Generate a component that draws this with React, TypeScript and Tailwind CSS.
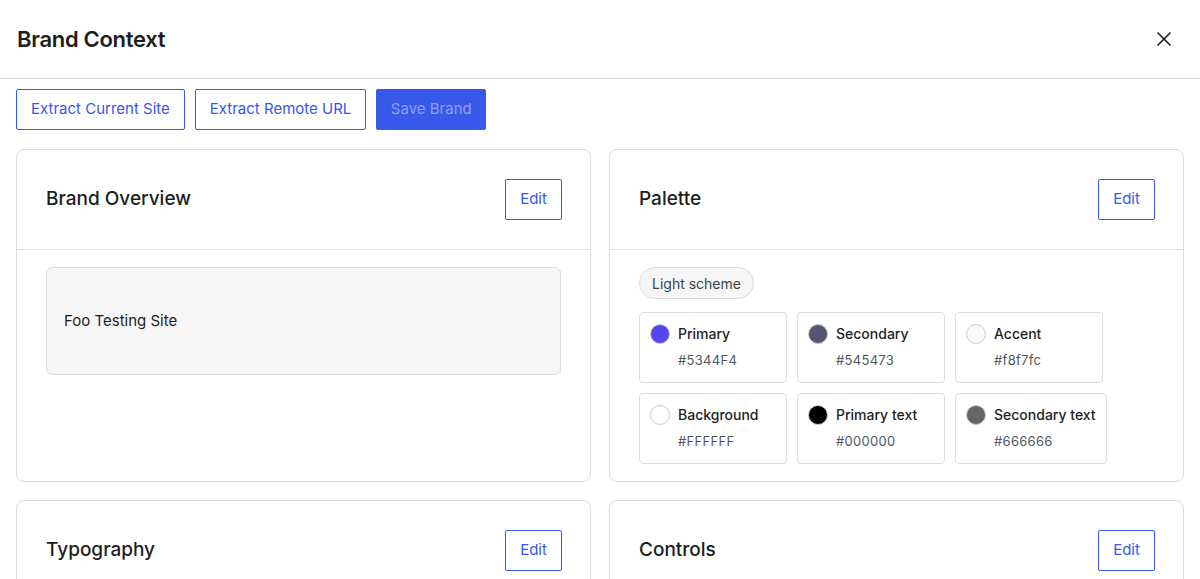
import { X } from 'lucide-react';

const COLORS = [
  { name: 'Primary', hex: '#5344F4' },
  { name: 'Secondary', hex: '#545473' },
  { name: 'Accent', hex: '#f8f7fc' },
  { name: 'Background', hex: '#FFFFFF' },
  { name: 'Primary text', hex: '#000000' },
  { name: 'Secondary text', hex: '#666666' },
];

function Card({ title, children }: { title: string; children?: React.ReactNode }) {
  return (
    <div className="border border-[#dcdcde] rounded-[8px] bg-white h-[333px] overflow-hidden">
      <div className="h-[100px] flex items-center justify-between pl-[29px] pr-[28px] border-b border-[#e0e0e0]">
        <h2 className="text-[19px] font-medium text-[#1e1e1e]">{title}</h2>
        <button className="w-[57px] h-[41px] border border-[#3858e9] rounded-[2px] text-[#3858e9] text-[15px]">Edit</button>
      </div>
      {children}
    </div>
  );
}

export default function App() {
  return (
    <div className="w-[1200px] h-[579px] overflow-hidden bg-white text-[#1e1e1e]" style={{ fontFamily: 'Inter, "Noto Sans", sans-serif' }}>
      <header className="h-[79px] flex items-center justify-between pl-[17px] pr-[24px] border-b border-[#dddddd]">
        <h1 className="text-[22px] font-semibold tracking-[-0.3px]">Brand Context</h1>
        <X size={24} strokeWidth={1.6} />
      </header>
      <div className="px-[16px]">
        <div className="flex gap-[10px] pt-[10px]">
          <button className="h-[41px] px-[14px] border border-[#3858e9] rounded-[2px] text-[#3858e9] text-[15px]">Extract Current Site</button>
          <button className="h-[41px] px-[14px] border border-[#3858e9] rounded-[2px] text-[#3858e9] text-[15px]">Extract Remote URL</button>
          <button className="h-[41px] w-[110px] bg-[#3858e9] rounded-[2px] text-[#8fa0f2] text-[15px]">Save Brand</button>
        </div>
        <div className="grid grid-cols-2 gap-x-[18px] gap-y-[18px] mt-[19px]">
          <Card title="Brand Overview">
            <div className="px-[29px] pt-[17px]">
              <div className="h-[108px] bg-[#f5f6f5] border border-[#dcdcde] rounded-[6px] flex items-center px-[17px] text-[15px]">Foo Testing Site</div>
            </div>
          </Card>
          <Card title="Palette">
            <div className="px-[29px] pt-[17px]">
              <span className="inline-flex items-center h-[32px] px-[12px] rounded-full border border-[#dcdcde] bg-[#f5f6f5] text-[14px] text-[#3c434a]">Light scheme</span>
              <div className="flex flex-wrap gap-x-[10px] gap-y-[10px] mt-[13px] w-[480px]">
                {COLORS.map(c => (
                  <div key={c.name} className="min-w-[148px] h-[71px] border border-[#dcdcde] rounded-[4px] px-[10px] pt-[10px]">
                    <div className="flex items-center gap-[8px]">
                      <span className="w-[20px] h-[20px] rounded-full border border-[#cccccc]" style={{ backgroundColor: c.hex }} />
                      <span className="text-[14px] font-medium">{c.name}</span>
                    </div>
                    <div className="pl-[28px] mt-[7px] text-[13px] text-[#50575e] tracking-[0.3px]">{c.hex}</div>
                  </div>
                ))}
              </div>
            </div>
          </Card>
          <Card title="Typography" />
          <Card title="Controls" />
        </div>
      </div>
    </div>
  );
}
